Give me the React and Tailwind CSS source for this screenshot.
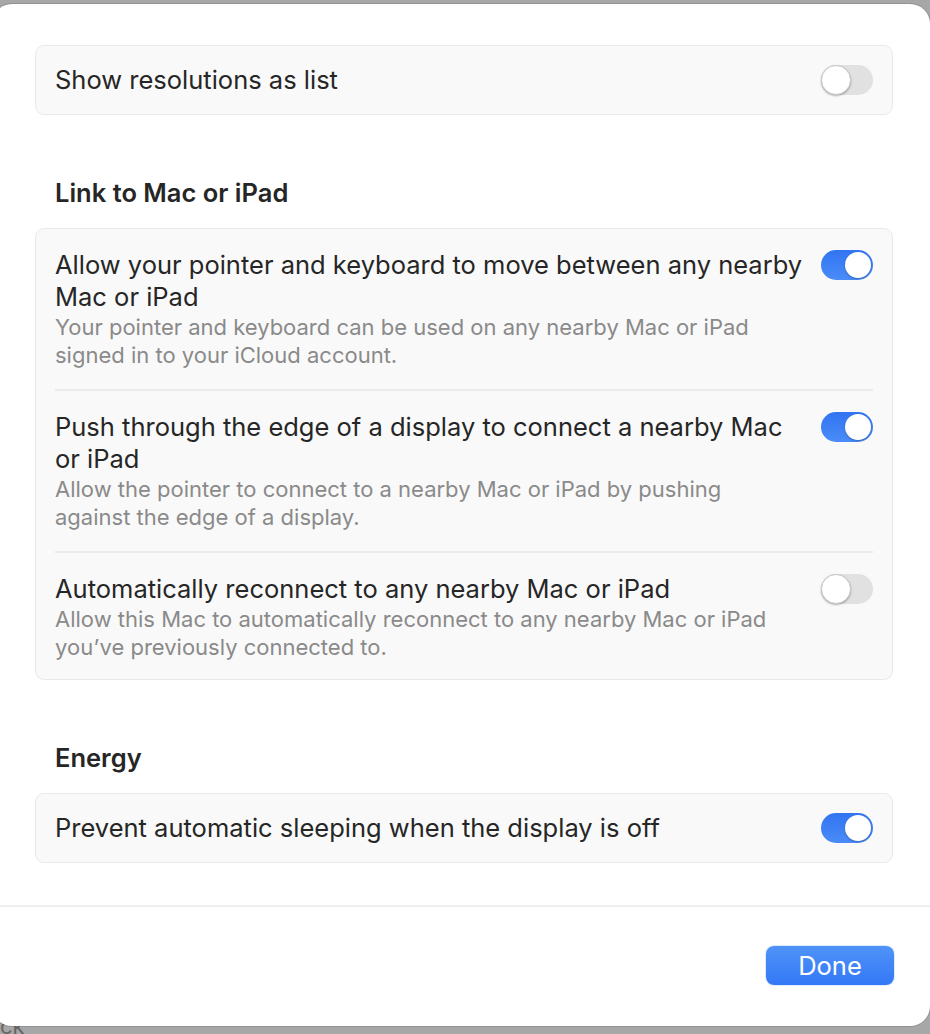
const font = { fontFamily: 'Inter, "Noto Sans", sans-serif' }

function Toggle({ on }) {
  return on ? (
    <div className="flex h-[30px] w-[52px] shrink-0 items-center justify-end rounded-full bg-gradient-to-b from-[#3274f1] to-[#4a8cf7] p-[2px]">
      <div className="h-[26px] w-[26px] rounded-full bg-white shadow-[0_1px_2px_rgba(0,0,0,0.25)]" />
    </div>
  ) : (
    <div className="flex h-[30px] w-[52px] shrink-0 items-center rounded-full bg-[#e1e1e1]">
      <div className="h-[30px] w-[30px] rounded-full border border-[#c8c8c8] bg-white shadow-[0_1px_2px_rgba(0,0,0,0.3)]" />
    </div>
  )
}

function Card({ children }) {
  return (
    <div className="rounded-[9px] border border-[#e9e9e9] bg-[#f9f9f9] px-[19px]">{children}</div>
  )
}

function SimpleRow({ title, on }) {
  return (
    <div className="flex h-[68px] items-center justify-between">
      <span className="text-[25.5px] leading-[32px] text-[#262626]">{title}</span>
      <Toggle on={on} />
    </div>
  )
}

function DetailRow({ title, desc, on, last }) {
  return (
    <div className={'flex items-start justify-between pt-[20px] ' + (last ? 'pb-[18px]' : 'pb-[20px] border-b-2 border-[#ebebeb]')}>
      <div className="w-[750px]">
        <p className="text-[25.5px] leading-[32px] text-[#262626]">{title}</p>
        <p className="max-w-[730px] text-[22px] leading-[28px] text-[#8a8a8a]">{desc}</p>
      </div>
      <div className="pt-[1px]">
        <Toggle on={on} />
      </div>
    </div>
  )
}

function Heading({ children }) {
  return (
    <h2 className="pl-[20px] text-[25.5px] font-semibold leading-[32px] text-[#262626]">{children}</h2>
  )
}

export default function App() {
  return (
    <div className="relative h-[1034px] w-[930px] overflow-hidden bg-[#a7a7a7]" style={font}>
      {/* window behind */}
      <span className="absolute left-[0px] top-[1015px] text-[22px] leading-[22px] text-[#666666]">ck</span>

      {/* Sheet */}
      <div className="relative z-10 ml-[-8px] mt-[4px] flex h-[1022px] w-[938px] flex-col rounded-[20px] bg-white shadow-[0_0_0_1px_rgba(0,0,0,0.12)]">
        <div className="flex flex-col pl-[43px] pr-[37px] pt-[41px]">
          <Card>
            <SimpleRow title="Show resolutions as list" on={false} />
          </Card>

          <div className="mt-[62px] mb-[19px]">
            <Heading>Link to Mac or iPad</Heading>
          </div>
          <Card>
            <DetailRow
              title="Allow your pointer and keyboard to move between any nearby Mac or iPad"
              desc="Your pointer and keyboard can be used on any nearby Mac or iPad signed in to your iCloud account."
              on
            />
            <DetailRow
              title="Push through the edge of a display to connect a nearby Mac or iPad"
              desc="Allow the pointer to connect to a nearby Mac or iPad by pushing against the edge of a display."
              on
            />
            <DetailRow
              title="Automatically reconnect to any nearby Mac or iPad"
              desc="Allow this Mac to automatically reconnect to any nearby Mac or iPad you’ve previously connected to."
              on={false}
              last
            />
          </Card>

          <div className="mt-[62px] mb-[19px]">
            <Heading>Energy</Heading>
          </div>
          <Card>
            <SimpleRow title="Prevent automatic sleeping when the display is off" on />
          </Card>
        </div>

        {/* Footer */}
        <div className="mt-[42px] border-t-2 border-[#efefef] pl-[43px] pr-[36px]">
          <div className="flex justify-end pt-[39px]">
            <button className="h-[39px] w-[128px] rounded-[8px] bg-gradient-to-b from-[#4f93f8] to-[#3478f6] text-[25.5px] leading-[39px] text-white shadow-[0_0_0_1px_rgba(52,120,246,0.15)]">
              Done
            </button>
          </div>
        </div>
      </div>
    </div>
  )
}
